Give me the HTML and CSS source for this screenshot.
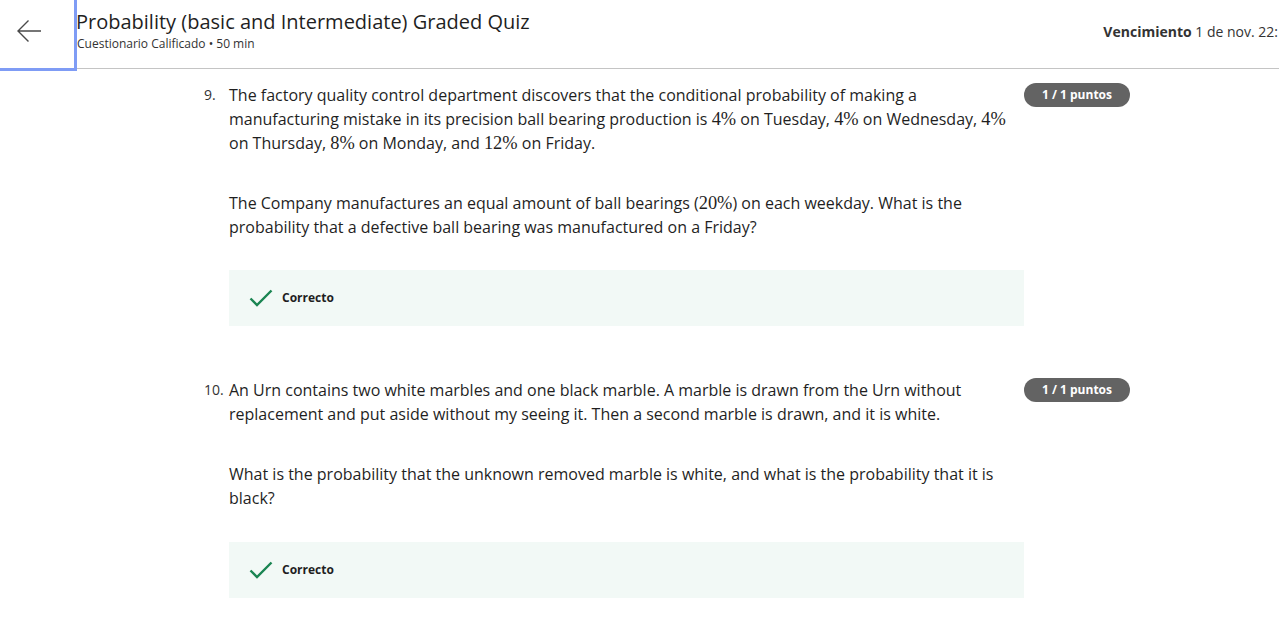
FILE: index.html
```html
<!DOCTYPE html>
<html lang="es">
<head>
<meta charset="utf-8">
<title>Probability (basic and Intermediate) Graded Quiz</title>
<link rel="stylesheet" href="styles.css">
</head>
<body>
<header class="topbar">
  <button class="back" aria-label="Volver">
    <svg width="26" height="24" viewBox="0 0 26 24"><path d="M25 12H2M12.5 1.5 2 12l10.5 10.5" fill="none" stroke="#4a4a4a" stroke-width="1.4"/></svg>
  </button>
  <div class="titles">
    <h1 class="title">Probability (basic and Intermediate) Graded Quiz</h1>
    <div class="subtitle">Cuestionario Calificado • 50 min</div>
  </div>
  <div class="due"><strong>Vencimiento</strong> 1 de nov. 22:</div>
</header>
<main class="content">
  <section class="question q9">
    <div class="num">9.</div>
    <div class="body">
      <p>The factory quality control department discovers that the conditional probability of making a manufacturing mistake in its precision ball bearing production is <span class="m">4%</span> on Tuesday, <span class="m">4%</span> on Wednesday, <span class="m">4%</span> on Thursday, <span class="m">8%</span> on Monday, and <span class="m">12%</span> on Friday.</p>
      <p>The Company manufactures an equal amount of ball bearings (<span class="m">20%</span>) on each weekday. What is the probability that a defective ball bearing was manufactured on a Friday?</p>
      <div class="feedback">
        <svg width="24" height="18" viewBox="0 0 24 18"><path d="M1.5 9.5 8 16 22.5 1.5" fill="none" stroke="#1a8552" stroke-width="2.4"/></svg>
        <span>Correcto</span>
      </div>
    </div>
    <div class="badge">1 / 1 puntos</div>
  </section>
  <section class="question q10">
    <div class="num">10.</div>
    <div class="body">
      <p>An Urn contains two white marbles and one black marble. A marble is drawn from the Urn without replacement and put aside without my seeing it. Then a second marble is drawn, and it is white.</p>
      <p>What is the probability that the unknown removed marble is white, and what is the probability that it is black?</p>
      <div class="feedback">
        <svg width="24" height="18" viewBox="0 0 24 18"><path d="M1.5 9.5 8 16 22.5 1.5" fill="none" stroke="#1a8552" stroke-width="2.4"/></svg>
        <span>Correcto</span>
      </div>
    </div>
    <div class="badge">1 / 1 puntos</div>
  </section>
</main>
</body>
</html>
```
FILE: styles.css
```css
* { box-sizing: border-box; }
html, body { margin: 0; padding: 0; overflow: hidden; }
body {
  font-family: "Open Sans", "Noto Sans", sans-serif;
  color: #1f1f1f;
  background: #fff;
  width: 1279px;
  height: 643px;
}
.topbar {
  display: flex;
  align-items: flex-start;
  height: 69px;
  border-bottom: 1px solid #c4c4c4;
  white-space: nowrap;
}
.back {
  flex: 0 0 auto;
  width: 77px;
  height: 71px;
  margin: 0;
  background: #fff;
  border: none;
  border-right: 3px solid #7f9cf5;
  border-bottom: 3px solid #7f9cf5;
  display: flex;
  align-items: center;
  padding: 0 0 6px 16px;
  cursor: pointer;
  position: relative;
  z-index: 1;
}
.titles {
  flex: 1 1 auto;
  padding-top: 9px;
}
.title {
  margin: 0 0 0 -1px;
  font-size: 20px;
  line-height: 26px;
  font-weight: 400;
  color: #1f1f1f;
}
.subtitle {
  font-size: 12px;
  line-height: 18px;
  color: #333;
}
.due {
  flex: 0 0 auto;
  padding-top: 22px;
  padding-right: 1px;
  font-size: 14px;
  line-height: 20px;
  color: #333;
}
.due strong { font-weight: 700; }
.content {
  padding: 14px 0 0 204px;
}
.question {
  display: grid;
  grid-template-columns: 25px 795px 106px;
  align-items: start;
}
.q10 { margin-top: 52px; }
.num {
  font-size: 14px;
  line-height: 24px;
  color: #333;
}
.body p {
  margin: 0 0 36px;
  width: 785px;
  font-size: 16px;
  line-height: 24px;
  color: #1f1f1f;
}
.body p:nth-of-type(2) { margin-bottom: 31px; }
.q10 .body p:nth-of-type(2) { margin-bottom: 32px; }
.m {
  font-family: "Liberation Serif", "DejaVu Serif", serif;
  font-size: 1.15em;
}
.feedback {
  height: 56px;
  background: #f2f9f6;
  display: flex;
  align-items: center;
  gap: 9px;
  padding-left: 20px;
  padding-bottom: 1px;
}
.feedback span {
  font-size: 12px;
  font-weight: 700;
  color: #1f1f1f;
}
.badge {
  height: 24px;
  border-radius: 12px;
  background: #636363;
  color: #fff;
  font-size: 12px;
  font-weight: 700;
  line-height: 24px;
  text-align: center;
}
```
